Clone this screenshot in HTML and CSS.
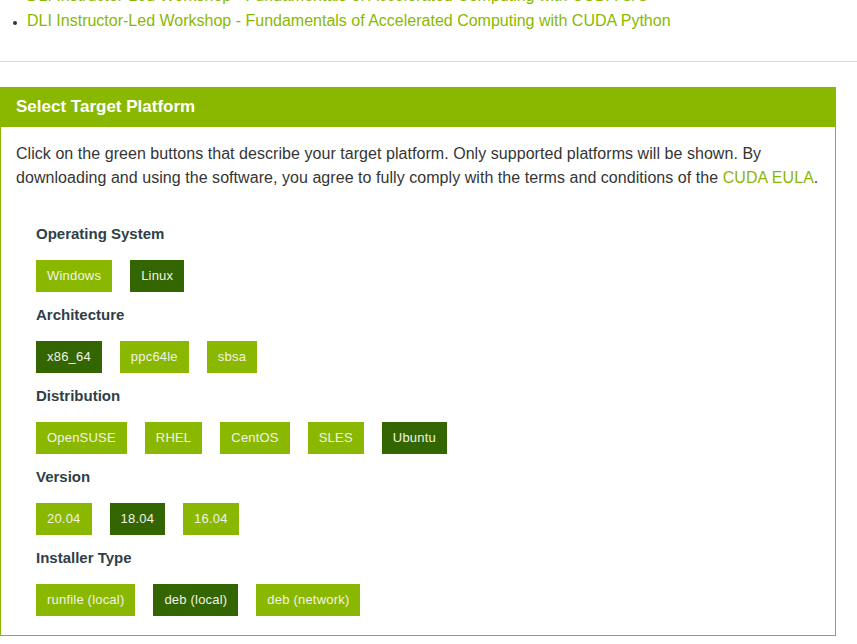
FILE: index.html
```html
<!DOCTYPE html>
<html lang="en">
<head>
<meta charset="utf-8">
<title>Select Target Platform</title>
<link rel="stylesheet" href="styles.css">
</head>
<body>
<div class="page">
  <ul class="resources">
    <li><a href="#">DLI Instructor-Led Workshop - Fundamentals of Accelerated Computing with CUDA C/C++</a></li>
    <li><a href="#">DLI Instructor-Led Workshop - Fundamentals of Accelerated Computing with CUDA Python</a></li>
  </ul>
  <hr class="divider">
  <section class="panel">
    <h2 class="panel-title">Select Target Platform</h2>
    <div class="panel-body">
      <p class="intro">Click on the green buttons that describe your target platform. Only supported platforms will be shown. By downloading and using the software, you agree to fully comply with the terms and conditions of the <a href="#">CUDA EULA</a>.</p>
      <div class="selectors">
        <div class="group">
          <h3 class="group-title">Operating System</h3>
          <div class="options">
            <span class="opt">Windows</span>
            <span class="opt active">Linux</span>
          </div>
        </div>
        <div class="group">
          <h3 class="group-title">Architecture</h3>
          <div class="options">
            <span class="opt active">x86_64</span>
            <span class="opt">ppc64le</span>
            <span class="opt">sbsa</span>
          </div>
        </div>
        <div class="group">
          <h3 class="group-title">Distribution</h3>
          <div class="options">
            <span class="opt">OpenSUSE</span>
            <span class="opt">RHEL</span>
            <span class="opt">CentOS</span>
            <span class="opt">SLES</span>
            <span class="opt active">Ubuntu</span>
          </div>
        </div>
        <div class="group">
          <h3 class="group-title">Version</h3>
          <div class="options">
            <span class="opt">20.04</span>
            <span class="opt active">18.04</span>
            <span class="opt">16.04</span>
          </div>
        </div>
        <div class="group">
          <h3 class="group-title">Installer Type</h3>
          <div class="options">
            <span class="opt">runfile (local)</span>
            <span class="opt active">deb (local)</span>
            <span class="opt">deb (network)</span>
          </div>
        </div>
      </div>
    </div>
  </section>
</div>
</body>
</html>
```
FILE: styles.css
```css
* { box-sizing: border-box; }
html, body { margin: 0; padding: 0; background: #fff; }
body {
  font-family: "Liberation Sans", Arial, sans-serif;
  color: #333;
  overflow: hidden;
}
.page { width: 857px; }
a { color: #8ab800; text-decoration: none; }

.resources {
  margin: -17px 0 0 0;
  padding: 0 0 0 27px;
  list-style: disc;
  font-size: 16px;
  line-height: 25px;
  color: #333;
}
.resources li::marker { font-size: 12px; }

.divider {
  margin: 28px 0 0 0;
  border: 0;
  border-top: 1px solid #d9d9d9;
  height: 0;
}

.panel {
  margin-top: 25px;
  width: 836px;
  border: 1px solid #8ab800;
  border-top: 0;
}
.panel-title {
  margin: 0 -1px;
  height: 40px;
  background: #8ab800;
  color: #fff;
  font-size: 17px;
  font-weight: bold;
  line-height: 40px;
  padding-left: 16px;
}
.panel-body { padding: 15px 15px 19px 15px; }
.intro {
  margin: 0;
  font-size: 16px;
  letter-spacing: 0.05px;
  line-height: 24px;
  color: #353535;
}
.selectors { padding: 34px 0 0 20px; }
.group + .group { margin-top: 13px; }
.group-title {
  margin: 0;
  font-size: 15px;
  font-weight: bold;
  line-height: 20px;
  color: #2f3f48;
}
.options {
  display: flex;
  gap: 18px;
  margin-top: 16px;
}
.opt {
  height: 32px;
  line-height: 32px;
  padding: 0 11px;
  font-size: 13px;
  letter-spacing: 0.2px;
  color: #f2f2e8;
  background: #8ab800;
}
.opt.active { background: #336600; }
```
